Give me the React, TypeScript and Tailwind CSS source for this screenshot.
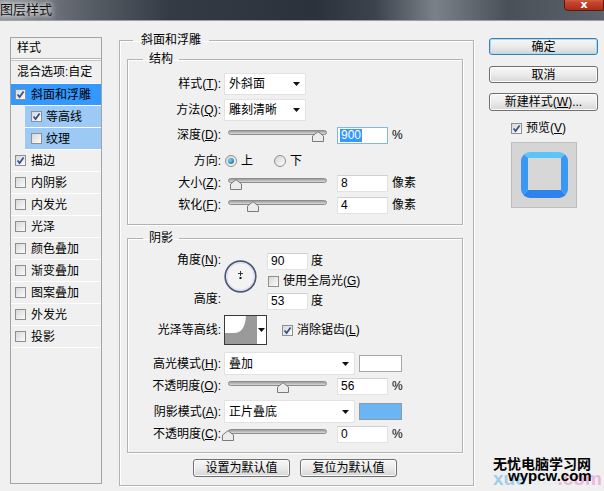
import React from "react";

const U = ({ c }: { c: string }) => <span className="underline underline-offset-[1px]">{c}</span>;

function Check({ on }: { on?: boolean }) {
  return (
    <span className="inline-flex items-center justify-center w-[11px] h-[11px] shrink-0 border border-[#8e8f8f] bg-gradient-to-br from-[#d8d8d8] to-[#fbfbfb]">
      {on && (
        <svg width="9" height="9" viewBox="0 0 9 9">
          <path d="M1.6 4.4 L3.6 7 L7.6 1.4" fill="none" stroke="#31508f" strokeWidth="1.7" />
        </svg>
      )}
    </span>
  );
}

function Radio({ on }: { on?: boolean }) {
  return (
    <span className="inline-flex items-center justify-center w-[12px] h-[12px] shrink-0 rounded-full border border-[#8e8f8f] bg-gradient-to-br from-[#d6d6d6] to-[#fbfbfb]">
      {on && <span className="w-[6px] h-[6px] rounded-full bg-[radial-gradient(circle_at_35%_35%,#7fd0f2,#0b5a91)]" />}
    </span>
  );
}

function Arrow() {
  return (
    <svg width="7" height="4" viewBox="0 0 7 4">
      <path d="M0 0 H7 L3.5 4 Z" fill="#111" />
    </svg>
  );
}

function Label({ children }: { children: React.ReactNode }) {
  return <div className="w-[93px] shrink-0 text-right leading-[14px]">{children}</div>;
}

function Select({ text, wide }: { text: string; wide?: boolean }) {
  return (
    <div
      className={
        (wide ? "w-[131px] h-[23px]" : "w-[82px] h-[22px]") +
        " ml-[3px] flex items-center justify-between bg-white border border-[#e2e2e2] pl-[4px] pr-[5px]"
      }
    >
      <span>{text}</span>
      <Arrow />
    </div>
  );
}

function Slider({ at }: { at: number }) {
  return (
    <div className="relative w-[99px] h-[14px] shrink-0 ml-[7px]">
      <div className="absolute left-0 right-0 top-[2px] h-[5px] rounded-full border border-[#8c8c8c] bg-gradient-to-b from-[#9c9c9c] to-[#dadada]" />
      <svg className="absolute top-[3px]" style={{ left: at - 6 }} width="12" height="11" viewBox="0 0 12 11">
        <path d="M0.5 10.5 V5 L6 0.7 L11.5 5 V10.5 Z" fill="#ececec" stroke="#7a7a7a" />
      </svg>
    </div>
  );
}

function NumBox({ v, sel, narrow }: { v: string; sel?: boolean; narrow?: boolean }) {
  return (
    <div
      className={
        (narrow ? "w-[41px]" : "w-[51px] ml-[10px]") +
        " h-[17px] shrink-0 flex items-center bg-white border pl-[2px] " +
        (sel ? "border-[#86b6e2]" : "border-[#e2e2e2] border-t-[#d0d0d0]")
      }
    >
      {sel ? (
        <span className="bg-[#3399ff] text-white px-[1px] leading-[13px]">{v}</span>
      ) : (
        <span className="pl-[1px]">{v}</span>
      )}
    </div>
  );
}

function SliderRow({ label, at, v, unit, sel, cls }: { label: React.ReactNode; at: number; v: string; unit: string; sel?: boolean; cls: string }) {
  return (
    <div className={"flex items-center " + cls}>
      <Label>{label}</Label>
      <Slider at={at} />
      <NumBox v={v} sel={sel} />
      <span className="ml-[4px]">{unit}</span>
    </div>
  );
}

function Btn({ children, primary, cls }: { children: React.ReactNode; primary?: boolean; cls: string }) {
  return (
    <div
      className={
        "flex items-center justify-center rounded-[3px] border bg-gradient-to-b from-[#f7f7f7] via-[#ebebeb] to-[#d5d5d5] " +
        (primary ? "border-[#3c7fb1] shadow-[inset_0_0_0_1px_#a6dcf4] " : "border-[#707070] shadow-[inset_0_0_0_1px_#fbfbfb] ") +
        cls
      }
    >
      {children}
    </div>
  );
}

function TitleBar() {
  return (
    <div className="relative h-[21px] border-b border-[#9aa0a6] bg-[linear-gradient(90deg,#8d9198_0%,#5a6068_14%,#353b44_28%,#2c323b_52%,#3d434c_62%,#7b8189_72%,#4a5058_84%,#5d636b_100%)]">
      <div className="absolute left-0 top-[1px] text-[13px] leading-[17px] text-[#111] [text-shadow:0_0_5px_#fff,0_0_8px_#fff]">图层样式</div>
      <div className="absolute right-0 top-[-6px] w-[40px] h-[17px] rounded-bl-[4px] border border-[#5a1a10] bg-gradient-to-b from-[#e08a74] via-[#c8452c] to-[#a82e18] flex items-end justify-center">
        <span className="text-white text-[11px] font-bold leading-[11px] font-['DejaVu_Sans',sans-serif]">x</span>
      </div>
    </div>
  );
}

const items: [string, boolean][] = [
  ["描边", true],
  ["内阴影", false],
  ["内发光", false],
  ["光泽", false],
  ["颜色叠加", false],
  ["渐变叠加", false],
  ["图案叠加", false],
  ["外发光", false],
  ["投影", false],
];

function StyleList() {
  return (
    <div className="ml-[10px] mt-[16px] w-[92px] h-[447px] shrink-0 border border-[#a3a3a3] bg-[#f0f0f0]">
      <div className="h-[21px] flex items-center pl-[6px] border-b border-[#b5b5b5]">样式</div>
      <div className="h-[1px] bg-white" />
      <div className="h-[24px] flex items-center pl-[6px] border-t border-[#c4c4c4] border-b border-b-white">混合选项:自定</div>
      <div className="h-[22px] flex items-center gap-[5px] pl-[4px] bg-[#3399ff] border-b border-white">
        <Check on />
        <span>斜面和浮雕</span>
      </div>
      <div className="h-[22px] flex items-center gap-[4px] ml-[14px] pl-[6px] bg-[#9ccaf4] border-b border-white">
        <Check on />
        <span>等高线</span>
      </div>
      <div className="h-[22px] flex items-center gap-[4px] ml-[14px] pl-[6px] bg-[#9ccaf4] border-b border-white">
        <Check />
        <span>纹理</span>
      </div>
      {items.map(([t, on]) => (
        <div key={t} className="h-[22px] flex items-center gap-[5px] pl-[4px] border-b border-white">
          <Check on={on} />
          <span>{t}</span>
        </div>
      ))}
    </div>
  );
}

const box = "border border-[#b3b3b3] shadow-[inset_1px_1px_0_#fff,1px_1px_0_#fff]";

function MainPanel() {
  return (
    <fieldset className={"ml-[17px] mt-[11px] w-[355px] shrink-0 pb-[8px] " + box}>
      <legend className="ml-[13px] px-[8px] leading-[16px]">斜面和浮雕</legend>

      <fieldset className={"ml-[7px] mt-[3px] w-[336px] pb-[10px] " + box}>
        <legend className="ml-[15px] px-[6px] leading-[16px]">结构</legend>
        <div className="flex items-center mt-[6px] h-[22px]">
          <Label>样式(<U c="T" />):</Label>
          <Select text="外斜面" />
        </div>
        <div className="flex items-center mt-[4px] h-[22px]">
          <Label>方法(<U c="Q" />):</Label>
          <Select text="雕刻清晰" />
        </div>
        <SliderRow cls="mt-[5px] h-[18px]" label={<>深度(<U c="D" />):</>} at={90} v="900" unit="%" sel />
        <div className="flex items-center mt-[7px] h-[20px]">
          <Label>方向:</Label>
          <span className="ml-[4px] flex items-center gap-[4px]">
            <Radio on />
            <span>上</span>
          </span>
          <span className="ml-[21px] flex items-center gap-[4px]">
            <Radio />
            <span>下</span>
          </span>
        </div>
        <SliderRow cls="mt-[3px] h-[18px]" label={<>大小(<U c="Z" />):</>} at={8} v="8" unit="像素" />
        <SliderRow cls="mt-[4px] h-[18px]" label={<>软化(<U c="F" />):</>} at={25} v="4" unit="像素" />
      </fieldset>

      <fieldset className={"ml-[7px] mt-[5px] w-[336px] pb-[8px] " + box}>
        <legend className="ml-[15px] px-[6px] leading-[16px]">阴影</legend>
        <div className="flex mt-[6px]">
          <div className="w-[93px] h-[56px] shrink-0 flex flex-col justify-between text-right">
            <div className="h-[17px] leading-[17px]">角度(<U c="N" />):</div>
            <div className="h-[17px] leading-[17px]">高度:</div>
          </div>
          <svg className="ml-[3px] mt-[8px] shrink-0" width="33" height="33" viewBox="0 0 33 33">
            <circle cx="16.5" cy="16.5" r="15.3" fill="#f3f3f3" stroke="#4a5778" strokeWidth="1.7" />
            <circle cx="16.5" cy="16.5" r="13.6" fill="none" stroke="#d8dce6" strokeWidth="1" />
            <path d="M16.5 11 V16 M14 13.5 H19" stroke="#222" strokeWidth="0.9" />
            <rect x="15.5" y="17" width="2" height="2" fill="#111" />
          </svg>
          <div className="ml-[10px] flex flex-col">
            <div className="flex items-center">
              <NumBox v="90" narrow />
              <span className="ml-[3px]">度</span>
            </div>
            <div className="h-[22px] flex items-center gap-[4px] ml-[1px]">
              <Check />
              <span>使用全局光(<U c="G" />)</span>
            </div>
            <div className="flex items-center">
              <NumBox v="53" narrow />
              <span className="ml-[3px]">度</span>
            </div>
          </div>
        </div>
        <div className="flex items-center mt-[5px] h-[30px]">
          <Label>光泽等高线:</Label>
          <div className="ml-[3px] flex h-[30px] border border-[#3a3a3a] bg-white">
            <svg width="31" height="28" viewBox="0 0 31 28">
              <path d="M0 17 L9 17 C16 17 20 12 21 0 L31 0 L31 28 L0 28 Z" fill="#9a9a9a" />
            </svg>
            <div className="w-[10px] flex items-center justify-center border-l border-[#9a9a9a]">
              <Arrow />
            </div>
          </div>
          <span className="ml-[15px] flex items-center gap-[4px]">
            <Check on />
            <span>消除锯齿(<U c="L" />)</span>
          </span>
        </div>
        <div className="flex items-center mt-[7px] h-[23px]">
          <Label>高光模式(<U c="H" />):</Label>
          <Select text="叠加" wide />
          <div className="ml-[4px] w-[43px] h-[17px] bg-white border border-[#a6a6a6]" />
        </div>
        <SliderRow cls="mt-[1px] h-[20px]" label={<>不透明度(<U c="O" />):</>} at={55} v="56" unit="%" />
        <div className="flex items-center mt-[4px] h-[23px]">
          <Label>阴影模式(<U c="A" />):</Label>
          <Select text="正片叠底" wide />
          <div className="ml-[4px] w-[43px] h-[17px] bg-[#6ab6f4] border border-[#8e9aa6]" />
        </div>
        <SliderRow cls="mt-[1px] h-[20px]" label={<>不透明度(<U c="C" />):</>} at={0} v="0" unit="%" />
      </fieldset>

      <div className="flex gap-[10px] ml-[73px] mt-[6px]">
        <Btn cls="w-[97px] h-[18px]">设置为默认值</Btn>
        <Btn cls="w-[97px] h-[18px]">复位为默认值</Btn>
      </div>
    </fieldset>
  );
}

function RightColumn() {
  return (
    <div className="ml-[15px] mt-[17px] w-[109px] shrink-0 flex flex-col">
      <Btn primary cls="h-[17px]">确定</Btn>
      <Btn cls="h-[17px] mt-[11px]">取消</Btn>
      <Btn cls="h-[18px] mt-[10px]">新建样式(<U c="W" />)...</Btn>
      <div className="mt-[10px] h-[14px] ml-[22px] flex items-center gap-[4px]">
        <Check on />
        <span>预览(<U c="V" />)</span>
      </div>
      <div className="mt-[7px] ml-[22px] w-[66px] h-[66px] border border-[#bdbdbd] bg-[#d5d5d5] flex items-center justify-center">
        <div className="w-[47px] h-[46px] rounded-[9px] bg-[#3690f0] border-t-[6px] border-t-[#5bc4f8] border-x-[7px] border-x-[#3a98f2] border-b-[8px] border-b-[#2f82ea] flex">
          <div className="flex-1 bg-[#d7d7d7]" />
        </div>
      </div>
    </div>
  );
}

function Watermark() {
  return (
    <>
      <div className="absolute left-[493px] top-[468px] whitespace-nowrap text-[19px] leading-[22px] font-bold font-['Liberation_Sans',sans-serif] opacity-70">
        <span className="text-[#7fc0e6]">xue</span>
        <span className="text-[#e2eef4]">xila</span>
        <span className="text-[#ec9fd2]">.com</span>
      </div>
      <div className="absolute left-[493px] top-[455px] whitespace-nowrap text-[14px] leading-[16px] font-bold text-black font-['Noto_Sans_CJK_SC',sans-serif]">
        无忧电脑学习网
      </div>
      <div className="absolute left-[508px] top-[469px] whitespace-nowrap text-[15px] leading-[14px] font-bold text-black font-['Liberation_Sans',sans-serif]">
        wypcw.com
      </div>
    </>
  );
}

export default function App() {
  return (
    <div className="relative w-[604px] h-[491px] overflow-hidden bg-[#f0f0f0] text-[12px] text-black font-['Liberation_Sans','Noto_Sans_CJK_SC',sans-serif]">
      <TitleBar />
      <div className="flex items-start">
        <StyleList />
        <MainPanel />
        <RightColumn />
      </div>
      <Watermark />
    </div>
  );
}
